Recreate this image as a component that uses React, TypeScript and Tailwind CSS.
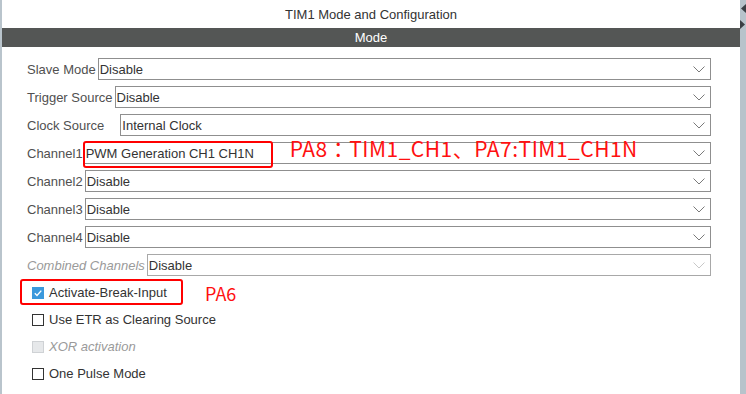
import React from "react";

const Chevron = ({ light }: { light?: boolean }) => (
  <svg width="12" height="7" viewBox="0 0 12 7" className="shrink-0">
    <path d="M0.5 0.5 L6 6 L11.5 0.5" fill="none" stroke={light ? "#c8c8c8" : "#7a7a7a"} strokeWidth="1" />
  </svg>
);

function Select({ value, disabled, children }: { value: string; disabled?: boolean; children?: React.ReactNode }) {
  return (
    <div className={`relative flex-1 h-[22px] flex items-center border ${disabled ? "border-[#a8a8a8]" : "border-[#8f8f8f]"} bg-white pl-[1px] pr-[5px]`}>
      <span className="flex-1 text-[13px] text-[#333] leading-none">{value}</span>
      <Chevron light={disabled} />
      {children}
    </div>
  );
}

function Row({ label, value, gap = "ml-[2px]", disabled, italic, children }: { label: string; value: string; gap?: string; disabled?: boolean; italic?: boolean; children?: React.ReactNode }) {
  return (
    <div className="flex items-center h-[22px]">
      <span className={`text-[13px] leading-none whitespace-pre ${italic ? "italic text-[#9a9a9a]" : "text-[#505050]"}`}>{label}</span>
      <div className={`flex-1 flex ${gap}`}>
        <Select value={value} disabled={disabled}>{children}</Select>
      </div>
    </div>
  );
}

function Check({ label, checked, disabled, children }: { label: string; checked?: boolean; disabled?: boolean; children?: React.ReactNode }) {
  return (
    <div className="relative flex items-center h-[27px] pl-[5px]">
      {checked ? (
        <div className="w-[12px] h-[12px] bg-[#3b99dc] flex items-center justify-center">
          <svg width="10" height="10" viewBox="0 0 10 10">
            <path d="M1.8 5.2 L4 7.4 L8.3 2.6" fill="none" stroke="white" strokeWidth="1.4" />
          </svg>
        </div>
      ) : disabled ? (
        <div className="w-[12px] h-[12px] bg-[#e6e8ea] border border-[#cfd2d5]" />
      ) : (
        <div className="w-[12px] h-[12px] bg-white border border-[#333]" />
      )}
      <span className={`ml-[5px] text-[13px] leading-none ${disabled ? "italic text-[#9a9a9a]" : "text-[#333]"}`}>{label}</span>
      {children}
    </div>
  );
}

export default function App() {
  return (
    <div className="w-[746px] h-[394px] flex bg-white overflow-hidden" style={{ fontFamily: '"Liberation Sans", Arial, sans-serif' }}>
      <div className="w-[2px] bg-[#b9c4cc]" />
      <div className="flex-1 flex flex-col">
        <div className="h-[28px] flex items-center justify-center text-[13px] text-[#333] pt-[2px]">TIM1 Mode and Configuration</div>
        <div className="h-[19px] bg-[#545655] flex items-center justify-center text-[13px] text-white">Mode</div>
        <div className="flex flex-col gap-[6px] pl-[25px] pr-[29px] pt-[11px]">
          <Row label="Slave Mode" value="Disable" />
          <Row label="Trigger Source" value="Disable" />
          <Row label="Clock Source" value="Internal Clock" gap="ml-[16px]" />
          <Row label="Channel1" value="PWM Generation CH1 CH1N" gap="ml-[1px]">
            <div className="absolute left-[-2px] top-[-2px] w-[190px] h-[27px] border-2 border-[#ff0000] rounded-[3px]" />
            <span className="absolute left-[205px] top-[-5px] text-[21px] leading-none tracking-[0.5px] text-[#ff1010] whitespace-nowrap" style={{ fontFamily: '"Noto Sans CJK JP", "Noto Sans", sans-serif' }}>
              PA8：TIM1_CH1、PA7:TIM1_CH1N
            </span>
          </Row>
          <Row label="Channel2" value="Disable" gap="ml-[2px]" />
          <Row label="Channel3" value="Disable" gap="ml-[2px]" />
          <Row label="Channel4" value="Disable" gap="ml-[2px]" />
          <Row label="Combined Channels" value="Disable" gap="ml-[2px]" disabled italic />
        </div>
        <div className="flex flex-col pl-[25px] pt-[3px]">
          <Check label="Activate-Break-Input" checked>
            <div className="absolute left-[-7px] top-0 w-[163px] h-[26px] border-2 border-[#ff0000] rounded-[3px]" />
            <span className="absolute left-[178px] top-[5px] text-[18px] leading-none text-[#ff1010]" style={{ fontFamily: '"Noto Sans CJK SC", "Noto Sans", sans-serif' }}>PA6</span>
          </Check>
          <Check label="Use ETR as Clearing Source" />
          <Check label="XOR activation" disabled />
          <Check label="One Pulse Mode" />
        </div>
      </div>
      <div className="w-[6px] bg-[#b7c3cb] flex flex-col items-end pt-[3px]">
        <svg width="6" height="28" viewBox="0 0 6 28">
          <path d="M6 1 L1 5.5 L6 10 Z" fill="#3a3f44" />
          <path d="M0 17 L5 21.5 L0 26 Z" fill="#3a3f44" />
        </svg>
      </div>
    </div>
  );
}
